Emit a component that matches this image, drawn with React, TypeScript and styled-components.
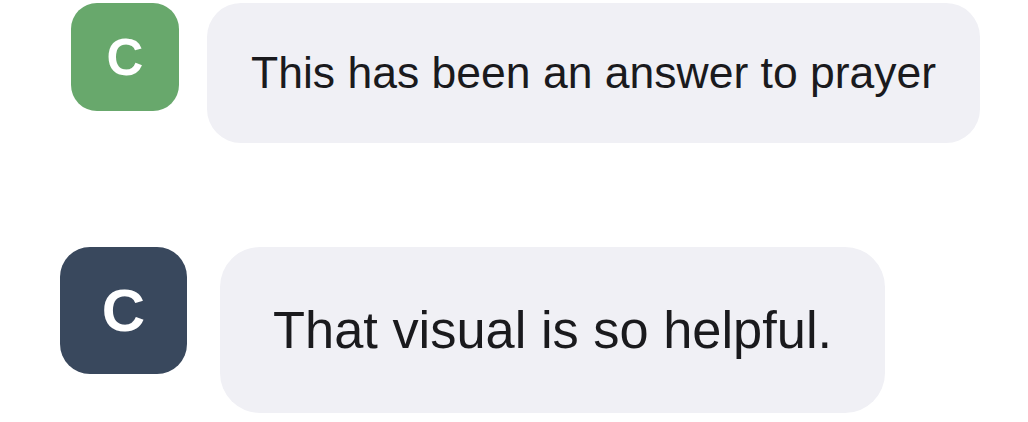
import React from 'react';
import styled, { createGlobalStyle } from 'styled-components';

const GlobalStyle = createGlobalStyle`
  html, body {
    margin: 0;
    padding: 0;
    background: #ffffff;
  }
  body {
    font-family: 'Liberation Sans', Arial, sans-serif;
  }
`;

const Thread = styled.main`
  width: 1028px;
  height: 422px;
  overflow: hidden;
  display: flex;
  flex-direction: column;
  gap: 104px;
  padding-top: 3px;
  box-sizing: border-box;
`;

type RowProps = { $indent: number; $gap: number };

const Row = styled.div<RowProps>`
  display: flex;
  align-items: flex-start;
  margin-left: ${(p) => p.$indent}px;
  gap: ${(p) => p.$gap}px;
`;

type AvatarProps = { $size: number; $color: string; $font: number; $radius: number };

const Avatar = styled.div<AvatarProps>`
  flex: none;
  width: ${(p) => p.$size}px;
  height: ${(p) => p.$size}px;
  border-radius: ${(p) => p.$radius}px;
  background: ${(p) => p.$color};
  color: #ffffff;
  display: flex;
  align-items: center;
  justify-content: center;
  font-family: 'Liberation Sans', Arial, sans-serif;
  font-weight: 700;
  font-size: ${(p) => p.$font}px;
  line-height: 1;
`;

type BubbleProps = { $height: number; $padX: number; $font: number; $radius: number };

const Bubble = styled.div<BubbleProps>`
  height: ${(p) => p.$height}px;
  box-sizing: border-box;
  padding: 0 ${(p) => p.$padX}px;
  border-radius: ${(p) => p.$radius}px;
  background: #f0f0f5;
  color: #1a1a1d;
  display: flex;
  align-items: center;
  font-size: ${(p) => p.$font}px;
  white-space: nowrap;
`;

type Message = {
  text: string;
  color: string;
  indent: number;
  gap: number;
  avatar: number;
  letter: number;
  avatarRadius: number;
  height: number;
  padX: number;
  font: number;
  radius: number;
};

const messages: Message[] = [
  {
    text: 'This has been an answer to prayer',
    color: '#68a86c',
    indent: 71,
    gap: 28,
    avatar: 108,
    letter: 51,
    avatarRadius: 26,
    height: 140,
    padX: 44,
    font: 44.5,
    radius: 34,
  },
  {
    text: 'That visual is so helpful.',
    color: '#39485d',
    indent: 60,
    gap: 33,
    avatar: 127,
    letter: 60,
    avatarRadius: 30,
    height: 166,
    padX: 53,
    font: 52.4,
    radius: 40,
  },
];

export default function App(): JSX.Element {
  return (
    <>
      <GlobalStyle />
      <Thread>
        {messages.map((m) => (
          <Row key={m.text} $indent={m.indent} $gap={m.gap}>
            <Avatar $size={m.avatar} $color={m.color} $font={m.letter} $radius={m.avatarRadius}>
              C
            </Avatar>
            <Bubble $height={m.height} $padX={m.padX} $font={m.font} $radius={m.radius}>
              {m.text}
            </Bubble>
          </Row>
        ))}
      </Thread>
    </>
  );
}
